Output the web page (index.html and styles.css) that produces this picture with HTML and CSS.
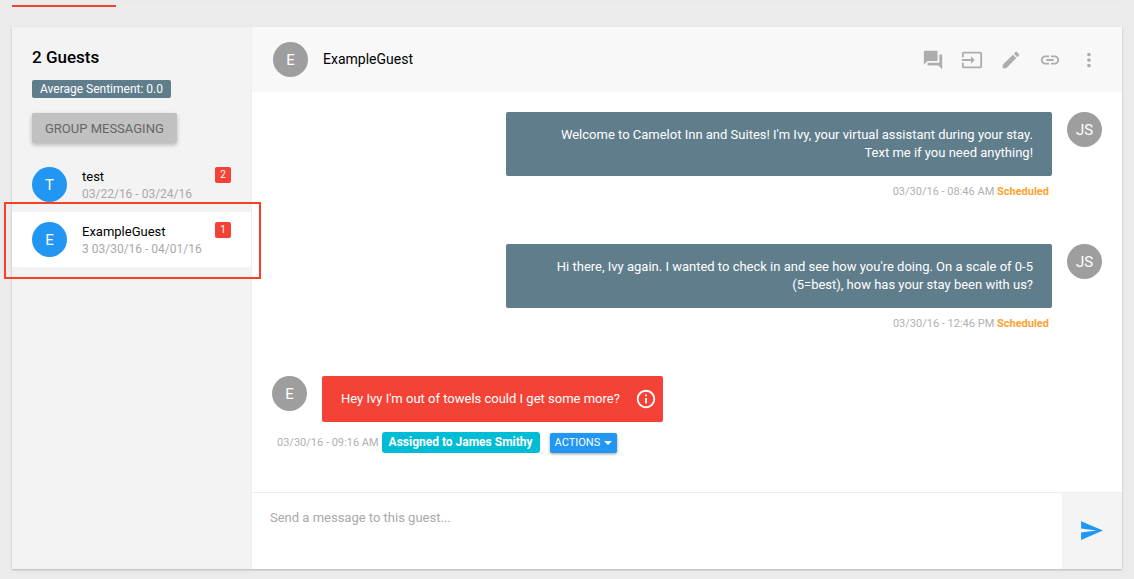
FILE: index.html
```html
<!DOCTYPE html>
<html lang="en">
<head>
<meta charset="utf-8">
<meta name="viewport" content="width=device-width, initial-scale=1">
<title>Guest Messaging</title>
<link rel="stylesheet" href="styles.css">
</head>
<body class="page">
<div class="tabs"><div class="tab-ink"></div></div>
<main class="panel">
  <aside class="sidebar">
    <div class="sidebar-head">
      <h1 class="title">2 Guests</h1>
      <span class="sentiment">Average Sentiment: 0.0</span>
      <button class="group-button" type="button">GROUP MESSAGING</button>
    </div>
    <ul class="guests">
      <li class="guest">
        <span class="avatar avatar-blue">T</span>
        <div class="guest-info"><div class="guest-name">test</div><div class="guest-dates">03/22/16 - 03/24/16</div></div>
        <span class="count">2</span>
      </li>
      <li class="guest guest-active">
        <span class="avatar avatar-blue">E</span>
        <div class="guest-info"><div class="guest-name">ExampleGuest</div><div class="guest-dates">3 03/30/16 - 04/01/16</div></div>
        <span class="count">1</span>
        <span class="highlight"></span>
      </li>
    </ul>
  </aside>
  <section class="chat">
    <header class="chat-head">
      <span class="avatar">E</span>
      <h2 class="chat-name">ExampleGuest</h2>
      <div class="tools">
        <button class="tool" type="button" aria-label="Conversations"><svg class="icon" viewBox="0 0 24 24"><path d="M21 6h-2v9H6v2c0 .55.45 1 1 1h11l4 4V7c0-.55-.45-1-1-1zm-4 6V3c0-.55-.45-1-1-1H3c-.55 0-1 .45-1 1v14l4-4h10c.55 0 1-.45 1-1z"/></svg></button>
        <button class="tool" type="button" aria-label="Check in"><svg class="icon" viewBox="0 0 24 24"><path d="M21 3.01H3c-1.1 0-2 .9-2 2V9h2V4.99h18v14.03H3V15H1v4.01c0 1.1.9 1.98 2 1.98h18c1.1 0 2-.88 2-1.98v-14c0-1.11-.9-2-2-2zM11 16l4-4-4-4v3H1v2h10v3z"/></svg></button>
        <button class="tool" type="button" aria-label="Edit"><svg class="icon" viewBox="0 0 24 24"><path d="M3 17.25V21h3.75L17.81 9.94l-3.75-3.75L3 17.25zM20.71 7.04c.39-.39.39-1.02 0-1.41l-2.34-2.34c-.39-.39-1.02-.39-1.41 0l-1.83 1.83 3.75 3.75 1.83-1.83z"/></svg></button>
        <button class="tool" type="button" aria-label="Link"><svg class="icon" viewBox="0 0 24 24"><path d="M3.9 12c0-1.71 1.39-3.1 3.1-3.1h4V7H7c-2.76 0-5 2.24-5 5s2.24 5 5 5h4v-1.9H7c-1.71 0-3.1-1.39-3.1-3.1zM8 13h8v-2H8v2zm9-6h-4v1.9h4c1.71 0 3.1 1.39 3.1 3.1s-1.39 3.1-3.1 3.1h-4V17h4c2.76 0 5-2.24 5-5s-2.24-5-5-5z"/></svg></button>
        <button class="tool" type="button" aria-label="More"><svg class="icon" viewBox="0 0 24 24"><path d="M12 8c1.1 0 2-.9 2-2s-.9-2-2-2-2 .9-2 2 .9 2 2 2zm0 2c-1.1 0-2 .9-2 2s.9 2 2 2 2-.9 2-2-.9-2-2-2zm0 6c-1.1 0-2 .9-2 2s.9 2 2 2 2-.9 2-2-.9-2-2-2z"/></svg></button>
      </div>
    </header>
    <div class="messages">
      <article class="message message-out">
        <div class="row">
          <p class="bubble">Welcome to Camelot Inn and Suites! I'm Ivy, your virtual assistant during your stay. Text me if you need anything!</p>
          <span class="avatar">JS</span>
        </div>
        <div class="meta"><span>03/30/16 - 08:46 AM</span> <strong class="status">Scheduled</strong></div>
      </article>
      <article class="message message-out">
        <div class="row">
          <p class="bubble">Hi there, Ivy again. I wanted to check in and see how you're doing. On a scale of 0-5 (5=best), how has your stay been with us?</p>
          <span class="avatar">JS</span>
        </div>
        <div class="meta"><span>03/30/16 - 12:46 PM</span> <strong class="status">Scheduled</strong></div>
      </article>
      <article class="message message-in">
        <div class="row">
          <span class="avatar">E</span>
          <div class="bubble bubble-alert">
            <span>Hey Ivy I'm out of towels could I get some more?</span>
            <svg class="info" viewBox="0 0 24 24"><path d="M11 17h2v-6h-2v6zm1-15C6.48 2 2 6.48 2 12s4.48 10 10 10 10-4.48 10-10S17.52 2 12 2zm0 18c-4.41 0-8-3.59-8-8s3.59-8 8-8 8 3.59 8 8-3.59 8-8 8zM11 9h2V7h-2v2z"/></svg>
          </div>
        </div>
        <div class="meta meta-in">
          <span>03/30/16 - 09:16 AM</span>
          <strong class="assigned">Assigned to James Smithy</strong>
          <button class="actions" type="button">ACTIONS <span class="caret"></span></button>
        </div>
      </article>
    </div>
    <form class="compose">
      <textarea class="compose-text" aria-label="Message" placeholder="Send a message to this guest..."></textarea>
      <button class="send" type="button" aria-label="Send"><svg class="send-icon" viewBox="0 0 24 24"><path d="M2.01 21L23 12 2.01 3 2 10l15 2-15 2z"/></svg></button>
    </form>
  </section>
</main>
</body>
</html>
```
FILE: styles.css
```css
* { box-sizing: border-box; }

.page {
  margin: 0;
  min-height: 100vh;
  padding: 5px 12px 10px;
  display: flex;
  flex-direction: column;
  gap: 20px;
  background: #ebebeb;
  color: #000;
  font: 13px/18px Roboto, "Liberation Sans", sans-serif;
}

button, textarea { font: inherit; border: 0; }
button { cursor: pointer; }

.tabs { background: linear-gradient(#eeeeee, #eeeeee) bottom / 100% 1px no-repeat; }
.tab-ink { width: 104px; height: 2px; background: #f44336; }

.panel {
  flex: 1;
  display: flex;
  background: #fff;
  box-shadow: 0 1px 2px rgba(0, 0, 0, .24);
}

.sidebar {
  width: 240px;
  flex: none;
  background: #f3f3f3;
  border-right: 1px solid #eee;
}
.sidebar-head {
  padding: 20px 20px 14px;
  display: flex;
  flex-direction: column;
  align-items: flex-start;
}
.title { margin: 0 0 12px; font-size: 17px; line-height: 21px; font-weight: 500; }
.sentiment {
  padding: 0 8px;
  margin-bottom: 15px;
  font-size: 12px;
  line-height: 18px;
  background: #607d8b;
  color: #fff;
  border-radius: 2px;
}
.group-button {
  height: 30px;
  padding: 1px 13px 0;
  background: #c1c1c1;
  color: #666;
  border-radius: 2px;
  box-shadow: 0 2px 4px rgba(0, 0, 0, .25);
}

.guests { margin: 0; padding: 0; list-style: none; }
.guest {
  position: relative;
  display: flex;
  align-items: flex-start;
  padding: 10px 20px;
}
.guest-active { background: #fff; }
.guest-info { flex: 1; margin-left: 15px; }
.guest-name { line-height: 20px; }
.guest-dates { font-size: 12px; line-height: 15px; color: #a9a9a9; }
.count {
  width: 16px;
  line-height: 16px;
  text-align: center;
  font-size: 10px;
  background: #f44336;
  color: #fff;
  border-radius: 2px;
}
.highlight {
  position: absolute;
  inset: -10px -10px -12px -8px;
  border: 2px solid #fb3f24;
}

.avatar {
  flex: none;
  width: 35px;
  height: 35px;
  line-height: 36px;
  border-radius: 50%;
  background: #9e9e9e;
  color: #fff;
  font-size: 15px;
  text-align: center;
}
.avatar-blue { background: #2196f3; }

.chat { flex: 1; min-width: 0; display: flex; flex-direction: column; }
.chat-head {
  display: flex;
  align-items: center;
  padding: 15px 21px;
  background: #f8f8f8;
}
.chat-name { margin: 0 0 2px 15px; font-size: 14px; font-weight: 400; }
.tools { margin-left: auto; display: flex; gap: 15px; }
.tool { display: flex; padding: 0 1px; background: none; }
.icon { width: 22px; height: 22px; fill: #adadad; }

.messages {
  flex: 1;
  padding: 20px 20px 36px;
  display: flex;
  flex-direction: column;
  gap: 43px;
}
.row { display: flex; align-items: flex-start; gap: 15px; }
.message-out .row { justify-content: flex-end; }
.bubble {
  margin: 0;
  max-width: 546px;
  padding: 14px 19px;
  background: #607d8b;
  color: #fff;
  border-radius: 2px;
}
.message-out .bubble { padding-left: 40px; text-align: right; }
.bubble-alert {
  display: flex;
  align-items: center;
  gap: 15px;
  padding: 12px 6px 12px 19px;
  background: #f44336;
}
.info { width: 22px; height: 22px; fill: #fff; }
.meta { margin-top: 7px; font-size: 11px; color: #b0b0b0; }
.message-out .meta { text-align: right; padding-right: 53px; }
.status { color: #ff9f2e; }
.message-in .meta {
  margin-top: 10px;
  padding-left: 5px;
  display: flex;
  align-items: center;
}
.assigned {
  margin: 0 10px 0 3px;
  padding: 0 7px;
  font-size: 12px;
  line-height: 21px;
  background: #00bcd4;
  color: #fff;
  border-radius: 3px;
}
.actions {
  display: flex;
  align-items: center;
  gap: 4px;
  height: 20px;
  padding: 1px 5px 0;
  background: #2196f3;
  color: #fff;
  border-radius: 2px;
  box-shadow: 0 1px 3px rgba(0, 0, 0, .4);
}
.caret { border: 4px solid transparent; border-top-color: #fff; border-bottom: 0; }

.compose { display: flex; height: 77px; border-top: 1px solid #eee; }
.compose-text {
  flex: 1;
  min-width: 0;
  padding: 16px 18px;
  background: #fff;
  color: #000;
  resize: none;
  outline: 0;
}
.compose-text::placeholder { color: #a9a9a9; opacity: 1; }
.send {
  width: 60px;
  padding: 0 2px 2px 0;
  display: flex;
  align-items: center;
  justify-content: center;
  background: #f4f4f4;
}
.send-icon { width: 25px; height: 25px; fill: #2196f3; }
```
